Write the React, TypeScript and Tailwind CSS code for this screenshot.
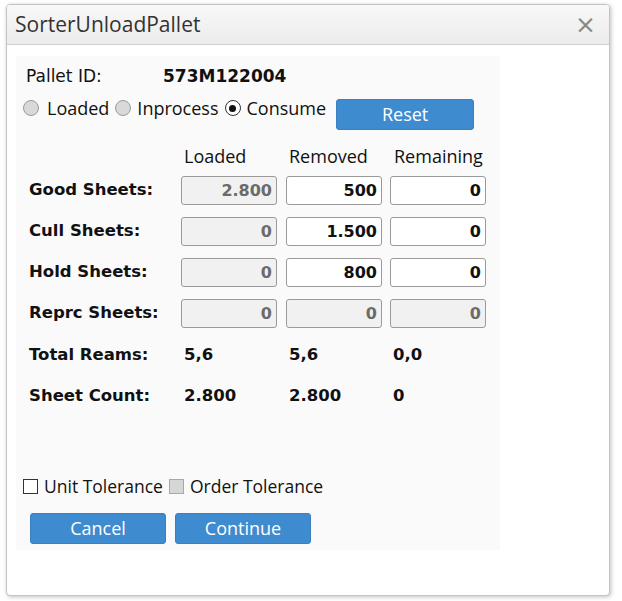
import React from "react";

const Radio = ({ checked }: { checked?: boolean }) =>
  checked ? (
    <span className="inline-flex h-[16px] w-[16px] shrink-0 items-center justify-center rounded-full border border-[#333] bg-white">
      <span className="h-[7px] w-[7px] rounded-full bg-[#111]" />
    </span>
  ) : (
    <span className="inline-block h-[16px] w-[16px] shrink-0 rounded-full border border-[#9a9a9a] bg-[#d9d9d9]" />
  );

const Field = ({ v, disabled }: { v: string; disabled?: boolean }) => (
  <div
    className={
      "flex h-[29px] w-[96px] items-center justify-end rounded-[3px] border border-[#9a9a9a] pr-[4px] font-['DejaVu_Sans',sans-serif] text-[16px] font-bold " +
      (disabled ? "bg-[#f1f1f1] text-[#6b6b6b]" : "bg-white text-[#111]")
    }
  >
    {v}
  </div>
);

const rows: [string, string, string, string, boolean][] = [
  ["Good Sheets:", "2.800", "500", "0", false],
  ["Cull Sheets:", "0", "1.500", "0", false],
  ["Hold Sheets:", "0", "800", "0", false],
  ["Reprc Sheets:", "0", "0", "0", true],
];

export default function App() {
  return (
    <div className="h-[601px] w-[622px] bg-white pl-[6px] pt-[4px]">
      <div className="flex h-[592px] w-[604px] flex-col overflow-hidden rounded-[4px] border border-[#c4c4c4] bg-white shadow-[1px_1px_4px_rgba(0,0,0,0.25)]">
        <div className="flex h-[40px] shrink-0 items-center justify-between border-b border-[#d0d0d0] bg-gradient-to-b from-[#f8f8f8] to-[#ececec] pl-[8px] pr-[13px]">
          <span className="font-['Open_Sans',sans-serif] text-[21px] text-[#333]">SorterUnloadPallet</span>
          <span className="font-['DejaVu_Sans',sans-serif] text-[25px] leading-none text-[#888]">×</span>
        </div>
        <div className="pl-[9px] pt-[11px]">
          <div className="flex h-[494px] w-[484px] flex-col bg-[#fafafa] text-[#111]">
            <div className="mt-[11px] flex h-[20px] items-center pl-[10px] font-['DejaVu_Sans',sans-serif] text-[17px]">
              <span className="w-[137px]">Pallet ID:</span>
              <span className="font-bold">573M122004</span>
            </div>
            <div className="mt-[10px] flex items-start pl-[7px] font-['Open_Sans',sans-serif] text-[18px]">
              <div className="flex h-[22px] items-center gap-[8px]">
                <Radio />
                <span>Loaded</span>
              </div>
              <div className="ml-[6px] flex h-[22px] items-center gap-[6px]">
                <Radio />
                <span>Inprocess</span>
              </div>
              <div className="ml-[6px] flex h-[22px] items-center gap-[6px]">
                <Radio checked />
                <span>Consume</span>
              </div>
              <button className="ml-[10px] mt-[2px] h-[31px] w-[138px] rounded-[3px] border border-[#3a7fc0] bg-[#3f8bcf] font-['Open_Sans',sans-serif] text-[18px] text-white">
                Reset
              </button>
            </div>
            <div className="mt-[15px] grid grid-cols-[152px_105px_104px_96px] pl-[13px]">
              <div />
              <div className="pl-[3px] font-['Open_Sans',sans-serif] text-[18px] leading-[22px]">Loaded</div>
              <div className="pl-[3px] font-['Open_Sans',sans-serif] text-[18px] leading-[22px]">Removed</div>
              <div className="pl-[4px] font-['Open_Sans',sans-serif] text-[18px] leading-[22px]">Remaining</div>
            </div>
            <div className="mt-[9px] flex flex-col gap-[12px] pl-[13px]">
              {rows.map(([l, a, b, c, dis]) => (
                <div key={l} className="grid h-[29px] grid-cols-[152px_105px_104px_96px] items-center">
                  <span className="font-['DejaVu_Sans',sans-serif] text-[16.5px] font-bold">{l}</span>
                  <Field v={a} disabled />
                  <Field v={b} disabled={dis} />
                  <Field v={c} disabled={dis} />
                </div>
              ))}
            </div>
            <div className="mt-[15px] flex flex-col gap-[21px] pl-[13px] font-['DejaVu_Sans',sans-serif] text-[16.5px] font-bold">
              <div className="grid h-[20px] grid-cols-[155px_105px_104px_80px] items-center">
                <span>Total Reams:</span>
                <span>5,6</span>
                <span>5,6</span>
                <span>0,0</span>
              </div>
              <div className="grid h-[20px] grid-cols-[155px_105px_104px_80px] items-center">
                <span>Sheet Count:</span>
                <span>2.800</span>
                <span>2.800</span>
                <span>0</span>
              </div>
            </div>
            <div className="mt-[71px] flex h-[22px] items-center pl-[7px] font-['Open_Sans',sans-serif] text-[17.5px]">
              <span className="inline-block h-[15px] w-[15px] border-[1.5px] border-[#333] bg-white" />
              <span className="ml-[6px]">Unit Tolerance</span>
              <span className="ml-[6px] inline-block h-[15px] w-[15px] border border-[#a8a8a8] bg-[#d6d6d6]" />
              <span className="ml-[6px]">Order Tolerance</span>
            </div>
            <div className="mt-[16px] flex gap-[9px] pl-[14px]">
              <button className="h-[31px] w-[136px] rounded-[3px] border border-[#3a7fc0] bg-[#3f8bcf] font-['Open_Sans',sans-serif] text-[18px] text-white">
                Cancel
              </button>
              <button className="h-[31px] w-[136px] rounded-[3px] border border-[#3a7fc0] bg-[#3f8bcf] font-['Open_Sans',sans-serif] text-[18px] text-white">
                Continue
              </button>
            </div>
          </div>
        </div>
      </div>
    </div>
  );
}
